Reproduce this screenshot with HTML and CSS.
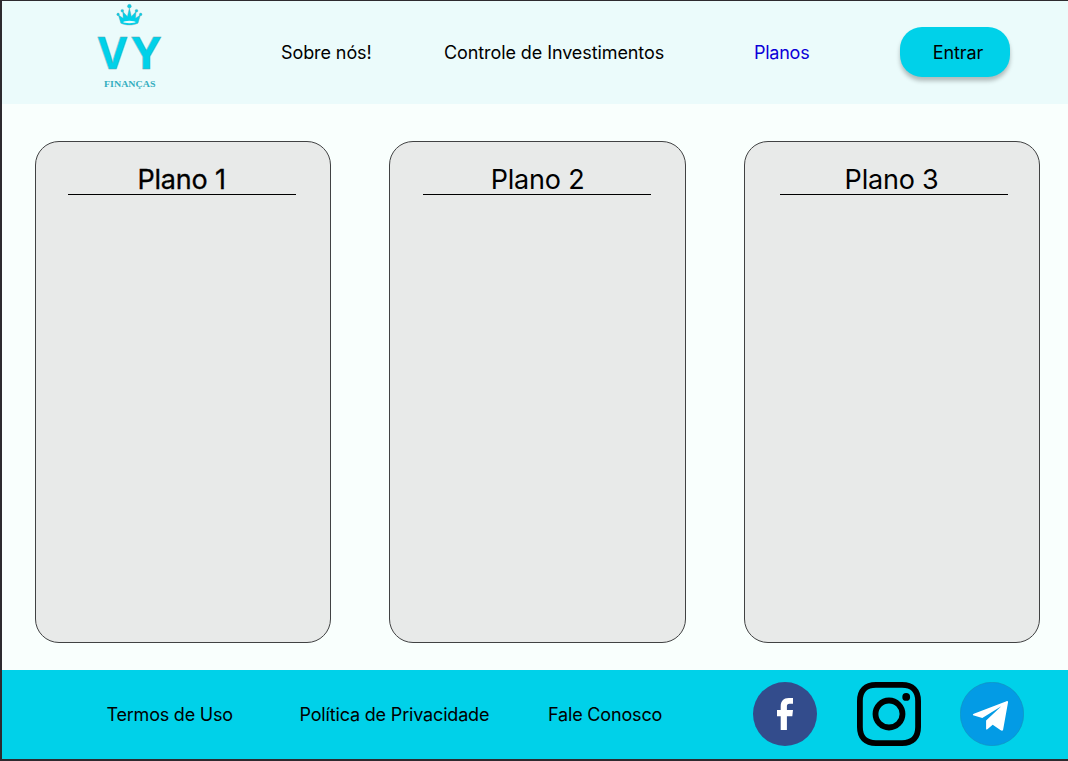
FILE: index.html
```html
<!DOCTYPE html>
<html lang="pt-BR">
<head>
<meta charset="utf-8">
<title>VY Finanças - Planos</title>
<link rel="stylesheet" href="styles.css">
</head>
<body>
<div class="page">
  <header class="header">
    <a class="logo">
      <svg class="logo-mark" width="100" height="103" viewBox="80 1 100 103">
        <g fill="#00d1e9" stroke="#5fa5b0" stroke-width=".4">
          <path d="M118.300 14.800 123.200 18.300 122.800 11.500 127.400 16.500 129.400 8 131.400 16.500 136 11.500 135.600 18.300 140.500 14.800 138 23.200C133 25.600 125.800 25.600 120.800 23.200Z"/>
          <circle cx="129.400" cy="6.200" r="1.900"/>
          <circle cx="122.300" cy="10.800" r="1.400"/>
          <circle cx="136.500" cy="10.800" r="1.400"/>
          <circle cx="118.100" cy="14.400" r="1.300"/>
          <circle cx="140.700" cy="14.400" r="1.300"/>
        </g>
        <ellipse cx="129.400" cy="22" rx="6.300" ry="1.200" fill="#ebfbfb"/>
        <text class="logo-letters" y="68.700"><tspan x="97.800" textLength="29.500" lengthAdjust="spacingAndGlyphs">V</tspan><tspan x="131.500" textLength="29.500" lengthAdjust="spacingAndGlyphs">Y</tspan></text>
        <text class="logo-name" x="104" y="87.300" textLength="51.500" lengthAdjust="spacingAndGlyphs">FINANÇAS</text>
      </svg>
    </a>
    <nav class="nav">
      <a class="nav-about">Sobre nós!</a>
      <a class="nav-control">Controle de Investimentos</a>
      <a class="nav-plans">Planos</a>
    </nav>
    <button class="login">Entrar</button>
  </header>
  <main class="plans">
    <section class="card"><h2 class="card-title card-title-strong">Plano 1</h2></section>
    <section class="card"><h2 class="card-title card-title-middle">Plano 2</h2></section>
    <section class="card"><h2 class="card-title card-title-last">Plano 3</h2></section>
  </main>
  <footer class="footer">
    <nav class="footer-nav">
      <a class="terms">Termos de Uso</a>
      <a class="privacy">Política de Privacidade</a>
      <a class="contact">Fale Conosco</a>
    </nav>
    <div class="social">
      <svg width="64" height="64" viewBox="0 0 64 64">
        <circle cx="32" cy="32" r="32" fill="#334c8c"/>
        <path fill="#fff" d="M27.700 48V34.200H24V28H27.700V24.500C27.700 19 30.500 16 35.700 16H40V21.700H36.500C34.500 21.700 33.900 22.700 33.900 24.500V28H40L39.300 34.200H33.900V48Z"/>
      </svg>
      <svg width="64" height="64" viewBox="0 0 64 64">
        <path fill="none" stroke="#000" stroke-width="5.800" d="M19 2.900H45C55.500 2.900 61.100 8.500 61.100 19V45C61.100 55.500 55.500 61.100 45 61.100H19C8.500 61.100 2.900 55.500 2.900 45V19C2.900 8.500 8.500 2.900 19 2.900Z"/>
        <circle cx="32" cy="32" r="13.500" fill="none" stroke="#000" stroke-width="5.800"/>
        <circle cx="49.200" cy="14.900" r="3.900"/>
      </svg>
      <svg width="64" height="64" viewBox="0 0 64 64">
        <circle cx="32" cy="32" r="31.700" fill="#039be5" stroke="#168eba" stroke-width=".6"/>
        <path fill="#fff" d="M13.800 31.700 46.500 19.200C47.500 18.800 48.200 19.500 48 20.500L43.200 47.200C43 48.700 42 49.100 40.700 48.300L32.700 42.700 27.400 47.200C26.500 47.900 26.100 47.700 26.100 46.700V38.500L41.300 24.300 22.300 36.100 13.900 33.500C12.500 33 12.500 32.300 13.800 31.700Z"/>
      </svg>
    </div>
  </footer>
</div>
</body>
</html>
```
FILE: styles.css
```css
* { box-sizing: border-box; }
body { margin: 0; font-family: Inter, sans-serif; font-size: 18px; color: #000; }
.page {
  height: 761px;
  display: flex;
  flex-direction: column;
  border: solid #2d2a2f;
  border-width: 1px 0 2px 2px;
  background: #f9fffd;
}
.header { height: 103px; display: flex; align-items: center; background: #ebfbfb; }
.logo { width: 100px; height: 103px; margin-left: 78px; }
.logo-mark { display: block; }
.logo-letters { font: bold 44.500px "Open Sans", sans-serif; fill: #00d1e9; stroke: #5fa5b0; stroke-width: .4px; }
.logo-name { font: bold 9px "Liberation Serif", serif; fill: #35aebf; }
.nav { display: flex; white-space: nowrap; letter-spacing: -.09px; }
.nav-about { width: 163px; margin-left: 101px; }
.nav-control { width: 310px; }
.nav-plans { width: 146px; color: #0b00d8; letter-spacing: -.25px; }
.login {
  width: 110px;
  height: 50px;
  margin-bottom: 1px;
  padding: 0 0 0 6px;
  border: 0;
  border-radius: 22px;
  background: #00d1e9;
  box-shadow: 0 4px 4px rgba(0, 0, 0, .25);
  font: inherit;
  letter-spacing: -.05px;
  color: #000;
}
.plans { flex: 1; display: flex; gap: 58px; padding: 37px 0 0 32.600px; }
.card {
  width: 296.500px;
  height: 502px;
  padding: 20px 33px 0;
  border: 1px solid #414243;
  border-radius: 24px;
  background: #e8eae9;
}
.card:first-child { padding-left: 32px; }
.card-title {
  width: 228px;
  height: 33px;
  margin: 0;
  border-bottom: 1px solid #000;
  font-size: 27px;
  font-weight: 400;
  letter-spacing: -.2px;
  line-height: 35px;
  text-align: center;
}
.card-title-strong { -webkit-text-stroke: .3px #000; }
.card-title-middle { padding-left: 1px; }
.card-title-last { margin-left: 2px; padding-right: 4px; }
.footer { height: 89px; display: flex; align-items: center; background: #00d1e9; }
.footer-nav { display: flex; white-space: nowrap; letter-spacing: -.17px; }
.terms { width: 193px; margin-left: 104.500px; letter-spacing: -.22px; }
.privacy { width: 248.500px; }
.contact { width: 205px; }
.social { display: flex; gap: 39.500px; margin-bottom: 1px; }
.social svg { display: block; }
```
